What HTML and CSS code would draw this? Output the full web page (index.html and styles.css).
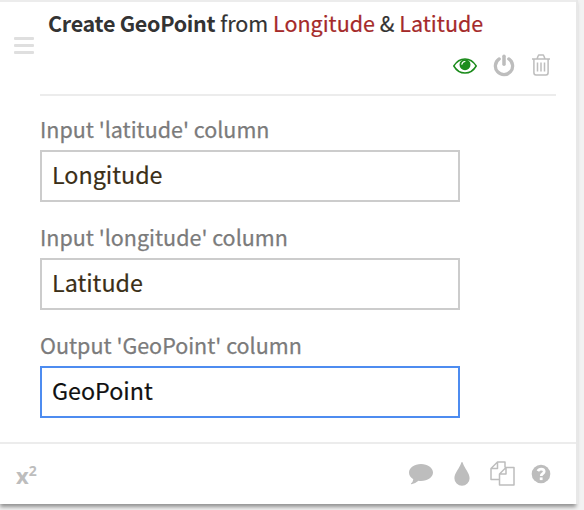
FILE: index.html
```
<!DOCTYPE html>
<html lang="en">
<head>
<meta charset="utf-8">
<title>Create GeoPoint</title>
<link rel="stylesheet" href="styles.css">
</head>
<body>
<section class="card">
  <header class="head">
    <div class="grip"><i></i><i></i><i></i></div>
    <div class="head-main">
      <h1 class="title"><b>Create GeoPoint</b> from <span class="col">Longitude</span> &amp; <span class="col">Latitude</span></h1>
      <div class="actions">
        <svg class="eye" width="24" height="16" viewBox="0 0 24 16"><path d="M.8 8Q5 .9 12 .9T23.200 8Q19 15.100 12 15.100T.8 8Z" fill="none" stroke="#1c8c1c" stroke-width="1.500"/><circle cx="12" cy="6.700" r="5.500" fill="#1c8c1c"/><path d="M8.900 6.200Q9.200 3.700 11.900 3.500" fill="none" stroke="#fff" stroke-width="1.200" stroke-linecap="round"/></svg>
        <svg class="power" width="22" height="23" viewBox="0 0 22 23" fill="none" stroke="#bdbdbd" stroke-linecap="round"><path d="M6.200 4.900A8.600 8.600 0 1 0 15.800 4.900" stroke-width="3.300"/><path d="M11 2.200V10.300" stroke-width="3.500"/></svg>
        <svg class="trash" width="20" height="22" viewBox="0 0 20 22" fill="none" stroke="#bdbdbd" stroke-width="1.500"><path d="M1 5H19M6 5L7.200 1.700Q7.400 1.100 8 1.100H12Q12.600 1.100 12.800 1.700L14 5M2.900 5V18.500Q2.900 21 5 21H15Q17.100 21 17.100 18.500V5M6.500 8.500V17.500M10 8.500V17.500M13.500 8.500V17.500"/></svg>
      </div>
    </div>
  </header>
  <form class="fields">
    <label class="field"><span>Input 'latitude' column</span><input type="text" value="Longitude"></label>
    <label class="field"><span>Input 'longitude' column</span><input type="text" value="Latitude"></label>
    <label class="field"><span>Output 'GeoPoint' column</span><input class="active" type="text" value="GeoPoint"></label>
  </form>
  <footer class="foot">
    <div class="power-of">x<sup>2</sup></div>
    <div class="tools">
      <svg class="comment" width="24" height="21" viewBox="0 0 24 21" fill="#bdbdbd"><path d="M12 0C18.600 0 24 3.700 24 8.500S18.600 17 12 17Q10.700 17 9.500 16.800Q6.500 19.500 2.400 20.300Q1.700 20.300 2 19.600Q4.100 17.600 4.300 15.200Q0 12.500 0 8.500C0 3.700 5.400 0 12 0Z"/></svg>
      <svg class="drop" width="16" height="24" viewBox="0 0 16 24" fill="#bdbdbd"><path d="M8 0Q8.600 0 8.900 1.200C10.300 6 15.600 10.800 15.600 16.200A7.600 7.600 0 0 1 .4 16.200C.4 10.800 5.700 6 7.100 1.200Q7.400 0 8 0Z"/></svg>
      <svg class="copy" width="25" height="25" viewBox="0 0 25 25" fill="none" stroke="#bdbdbd" stroke-width="1.500" stroke-linejoin="round"><path d="M9.500 18.500H1V7.500L7.500 1H15V6.500M7.500 1V7.500H1M16 6.500H24V24H9.500V13L16 6.500V13H9.500"/></svg>
      <svg class="help" width="20" height="20" viewBox="0 0 20 20"><circle cx="10" cy="10" r="9.300" fill="#bdbdbd"/><path d="M6.900 7.200Q7.900 5.100 10.200 5.100C12.100 5.100 13.200 6.200 13.200 7.600C13.200 9.700 10.200 9.700 10.200 12" fill="none" stroke="#fff" stroke-width="2.700"/><path d="M8.800 13.400H11.600V16.100H8.800Z" fill="#fff"/></svg>
    </div>
  </footer>
</section>
</body>
</html>
```
FILE: styles.css
```
* { box-sizing: border-box; }

body {
  margin: 0;
  height: 510px;
  overflow: hidden;
  background: #f2f2f2;
  font-family: "Noto Sans CJK SC", "Open Sans", sans-serif;
  color: #333;
}

.card {
  width: 576px;
  height: 504px;
  border-top: 2px solid #ececec;
  background: #fff;
  box-shadow: 2px 0 0 #e8e8e8, 0 3px 4px rgba(0, 0, 0, .4);
}

.head { display: flex; height: 94px; }

.grip {
  display: flex;
  flex-direction: column;
  gap: 4px;
  width: 40px;
  padding: 35px 0 0 14px;
}

.grip i { width: 20px; height: 3px; border-radius: 1px; background: #dfdfdf; }

.head-main { width: 516px; border-bottom: 2px solid #ececec; }

.title {
  margin: 0;
  height: 44px;
  padding-left: 8px;
  font-size: 21.5px;
  font-weight: 400;
  line-height: 42px;
  white-space: nowrap;
  -webkit-text-stroke: .2px;
}

.title b { letter-spacing: -.29px; -webkit-text-stroke: 0; }

.col { color: #a52a2a; }

.actions {
  display: flex;
  justify-content: flex-end;
  align-items: center;
  height: 38px;
  padding-right: 5px;
}

.eye { margin-top: 2px; }

.power { margin: 0 16px; }

.fields { height: 346px; padding: 18px 0 0 40px; }

.field { display: block; height: 108px; }

.field span {
  display: block;
  height: 36px;
  font-size: 21.5px;
  line-height: 30px;
  color: #7b7b7b;
  white-space: nowrap;
  -webkit-text-stroke: .25px;
}

.field input {
  display: block;
  width: 420px;
  height: 52px;
  padding: 0 10px 5px;
  border: 2px solid #ccc;
  border-radius: 0;
  outline: none;
  background: #fff;
  font: 23.3px "Noto Sans CJK SC", "Open Sans", sans-serif;
  color: #3b2f17;
  -webkit-text-stroke: .2px;
}

.field input.active { border-color: #4d8cf0; color: #111; }

.foot {
  display: flex;
  justify-content: space-between;
  height: 62px;
  border-top: 2px solid #ececec;
}

.power-of {
  padding-left: 16px;
  font: bold 22px/62px "Open Sans", sans-serif;
  color: #bdbdbd;
}

.power-of sup { font-size: 14px; line-height: 0; vertical-align: 8px; }

.tools { display: flex; align-items: center; padding: 0 25px 1px 0; }

.drop { margin: 0 20px 0 21px; }

.help { margin: 1px 0 0 16px; }

.comment { margin-top: 2px; }
```
